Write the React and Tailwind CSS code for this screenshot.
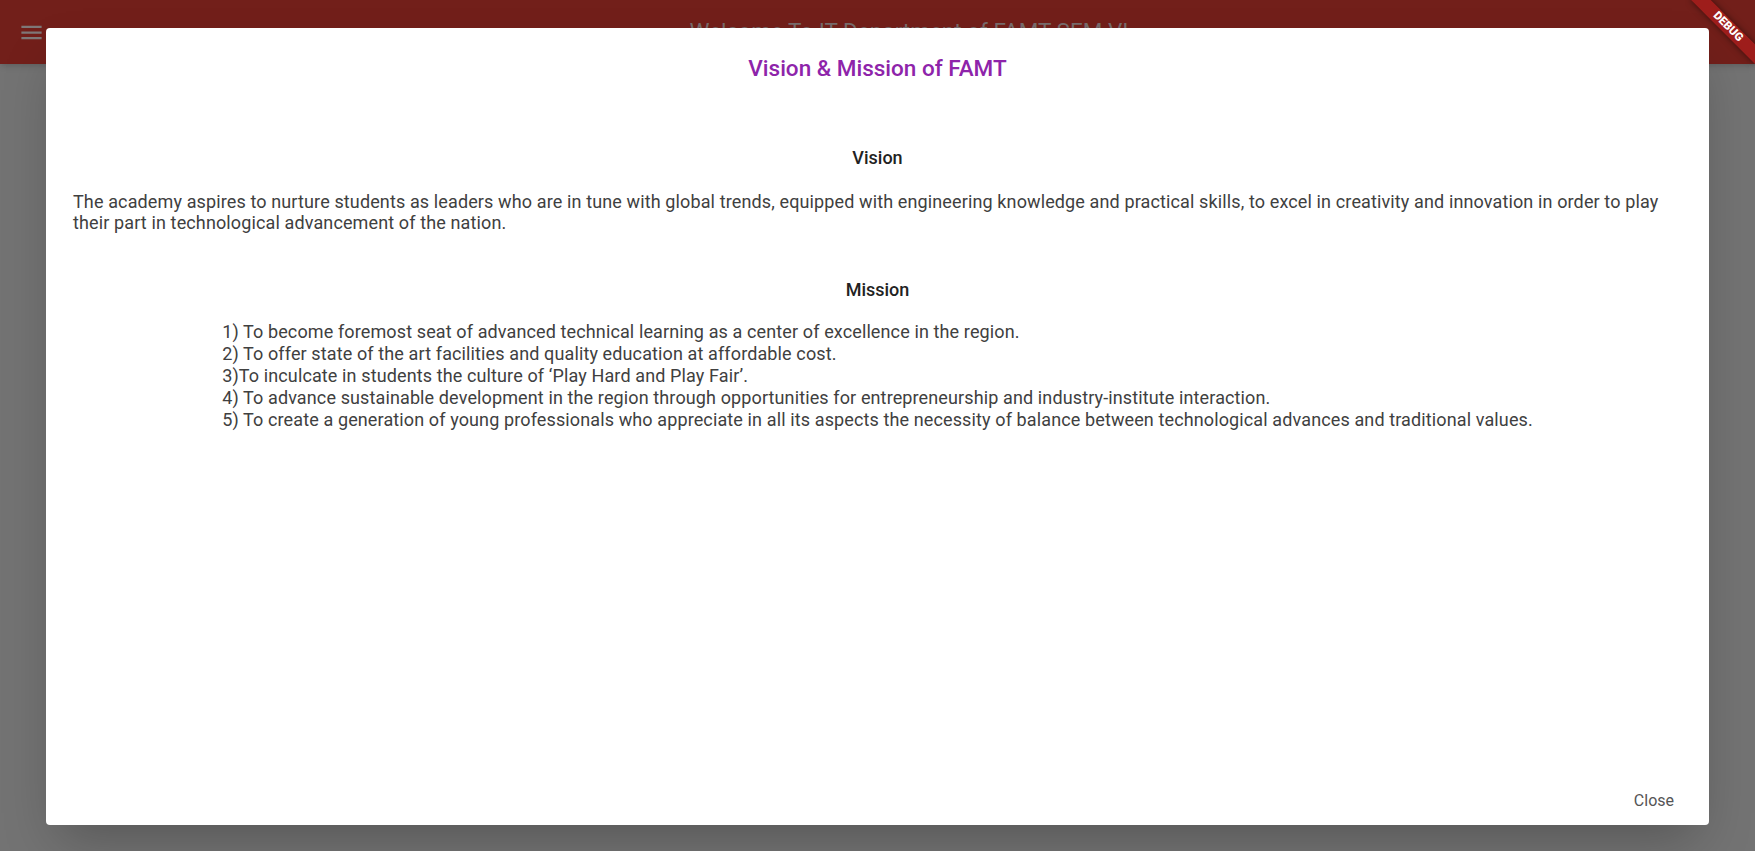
import React from 'react';

const missions = [
  "1) To become foremost seat of advanced technical learning as a center of excellence in the region.",
  "2) To offer state of the art facilities and quality education at affordable cost.",
  "3)To inculcate in students the culture of \u2018Play Hard and Play Fair\u2019.",
  "4) To advance sustainable development in the region through opportunities for entrepreneurship and industry-institute interaction.",
  "5) To create a generation of young professionals who appreciate in all its aspects the necessity of balance between technological advances and traditional values.",
];

const MenuIcon = () => (
  <svg width="27" height="27" viewBox="0 0 24 24" fill="#7f7878">
    <path d="M3 18h18v-2H3v2zm0-5h18v-2H3v2zm0-7v2h18V6H3z" />
  </svg>
);

const App = () => {
  return (
    <div className="relative h-[851px] w-full overflow-hidden bg-[#737373] font-['Roboto',sans-serif]">
      {/* app bar, dimmed by the modal barrier */}
      <header className="flex h-16 items-center bg-[#721f1a] shadow-md">
        <div className="flex w-[63px] justify-center">
          <MenuIcon />
        </div>
        <div className="flex-1 text-center text-[22.5px] text-[#786c6c]">
          Welcome To IT Department of FAMT SEM VI
        </div>
      </header>

      {/* dialog */}
      <div className="absolute left-[46px] top-[28px] flex h-[797px] w-[1663px] flex-col rounded-[4px] bg-white shadow-2xl">
        <div className="flex-1 px-[27px] pt-[27px]">
          <h2 className="text-center text-[22.5px] font-medium leading-[26px] text-[#8e24aa]">
            Vision &amp; Mission of FAMT
          </h2>

          <h3 className="mt-[66px] text-center text-[18px] font-medium leading-[21px] text-[#222]">Vision</h3>
          <p className="mt-[22.5px] text-[18px] leading-[21.5px] tracking-[0.125px] text-[#404040]">
            The academy aspires to nurture students as leaders who are in tune with global trends, equipped with engineering knowledge and practical skills, to excel in creativity and innovation in order to play their part in technological advancement of the nation.
          </p>

          <h3 className="mt-[45.5px] text-center text-[18px] font-medium leading-[21px] text-[#222]">Mission</h3>
          <div className="mx-auto mt-[21px] w-fit text-[18px] leading-[22px] tracking-[0.12px] text-[#404040]">
            {missions.map((m) => (
              <div key={m} className="whitespace-nowrap">{m}</div>
            ))}
          </div>
        </div>

        <div className="flex justify-end pb-[15px] pr-[35px]">
          <button className="text-[16px] leading-[19px] text-[#555]">Close</button>
        </div>
      </div>

      {/* debug banner */}
      <div className="absolute right-[-18px] top-[20px] flex h-[13.5px] w-[90px] rotate-45 items-center justify-center bg-[#b71c1c]/[0.63] shadow-[0_0_6px_rgba(0,0,0,0.5)]">
        <span className="text-[11.5px] font-black leading-none text-white">DEBUG</span>
      </div>
    </div>
  );
};

export default App;
